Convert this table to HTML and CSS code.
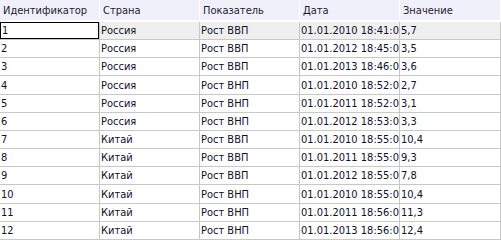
FILE: index.html
```html
<!DOCTYPE html>
<html lang="ru">
<head>
<meta charset="utf-8">
<title>Показатели</title>
<link rel="stylesheet" href="styles.css">
</head>
<body>
<div class="grid">
  <div class="hdr">Идентификатор</div>
  <div class="hdr">Страна</div>
  <div class="hdr">Показатель</div>
  <div class="hdr">Дата</div>
  <div class="hdr">Значение</div>

  <div class="cell sel focus">1</div><div class="cell sel">Россия</div><div class="cell sel">Рост ВВП</div><div class="cell sel">01.01.2010 18:41:0</div><div class="cell sel">5,7</div>
  <div class="cell">2</div><div class="cell">Россия</div><div class="cell">Рост ВВП</div><div class="cell">01.01.2012 18:45:0</div><div class="cell">3,5</div>
  <div class="cell">3</div><div class="cell">Россия</div><div class="cell">Рост ВВП</div><div class="cell">01.01.2013 18:46:0</div><div class="cell">3,6</div>
  <div class="cell">4</div><div class="cell">Россия</div><div class="cell">Рост ВНП</div><div class="cell">01.01.2010 18:52:0</div><div class="cell">2,7</div>
  <div class="cell">5</div><div class="cell">Россия</div><div class="cell">Рост ВНП</div><div class="cell">01.01.2011 18:52:0</div><div class="cell">3,1</div>
  <div class="cell">6</div><div class="cell">Россия</div><div class="cell">Рост ВНП</div><div class="cell">01.01.2012 18:53:0</div><div class="cell">3,3</div>
  <div class="cell">7</div><div class="cell">Китай</div><div class="cell">Рост ВВП</div><div class="cell">01.01.2010 18:55:0</div><div class="cell">10,4</div>
  <div class="cell">8</div><div class="cell">Китай</div><div class="cell">Рост ВВП</div><div class="cell">01.01.2011 18:55:0</div><div class="cell">9,3</div>
  <div class="cell">9</div><div class="cell">Китай</div><div class="cell">Рост ВВП</div><div class="cell">01.01.2012 18:55:0</div><div class="cell">7,8</div>
  <div class="cell">10</div><div class="cell">Китай</div><div class="cell">Рост ВНП</div><div class="cell">01.01.2010 18:55:0</div><div class="cell">10,4</div>
  <div class="cell">11</div><div class="cell">Китай</div><div class="cell">Рост ВНП</div><div class="cell">01.01.2011 18:56:0</div><div class="cell">11,3</div>
  <div class="cell">12</div><div class="cell">Китай</div><div class="cell">Рост ВНП</div><div class="cell">01.01.2013 18:56:0</div><div class="cell">12,4</div>
</div>
</body>
</html>
```

FILE: styles.css
```css
html, body {
  margin: 0;
  padding: 0;
  background: #ffffff;
}

.grid {
  display: grid;
  grid-template-columns: 100px 100px 100px 100px 101px;
  grid-template-rows: 22px repeat(12, 1fr);
  width: 501px;
  height: 240px;
  overflow: hidden;
  font-family: "DejaVu Sans Condensed", "DejaVu Sans", sans-serif;
  font-stretch: condensed;
  font-size: 11px;
}

.hdr {
  box-sizing: border-box;
  background: #f0f0fb;
  border-right: 1px solid #ffffff;
  border-bottom: 2px solid #ffffff;
  padding-left: 3px;
  display: flex;
  align-items: center;
  color: #1c1c2c;
  white-space: nowrap;
  overflow: hidden;
}

.cell {
  box-sizing: border-box;
  border-right: 1px solid #c8c8c8;
  border-bottom: 1px solid #c8c8c8;
  padding-left: 1px;
  display: flex;
  align-items: center;
  color: #10102a;
  white-space: nowrap;
  overflow: hidden;
}

.sel {
  background: #efefef;
}

.focus {
  background: #ffffff;
  box-shadow: inset 0 0 0 1px #000000;
  padding-left: 2px;
}
```
